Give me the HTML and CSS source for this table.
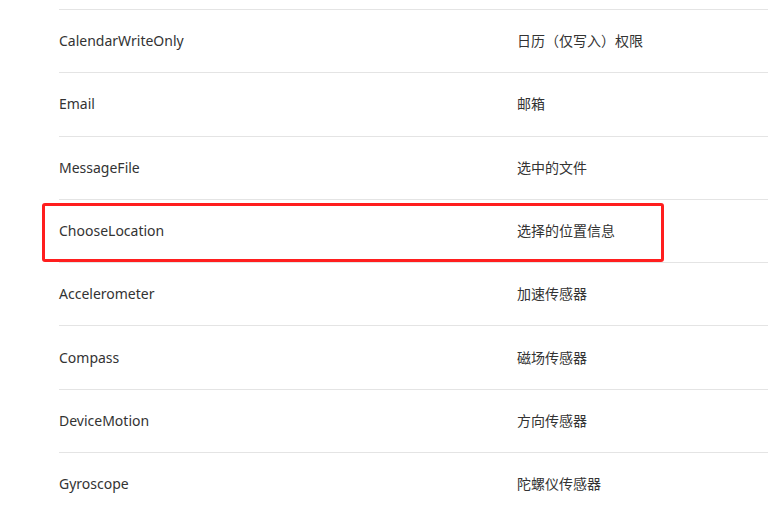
FILE: index.html
```html
<!DOCTYPE html>
<html lang="zh">
<head>
<meta charset="utf-8">
<link rel="stylesheet" href="styles.css">
</head>
<body>
<div class="table">
  <div class="row"><div class="key">CalendarWriteOnly</div><div class="val">日历（仅写入）权限</div></div>
  <div class="row"><div class="key">Email</div><div class="val">邮箱</div></div>
  <div class="row"><div class="key">MessageFile</div><div class="val">选中的文件</div></div>
  <div class="row highlighted"><div class="key">ChooseLocation</div><div class="val">选择的位置信息</div><div class="mark"></div></div>
  <div class="row"><div class="key">Accelerometer</div><div class="val">加速传感器</div></div>
  <div class="row"><div class="key">Compass</div><div class="val">磁场传感器</div></div>
  <div class="row"><div class="key">DeviceMotion</div><div class="val">方向传感器</div></div>
  <div class="row"><div class="key">Gyroscope</div><div class="val">陀螺仪传感器</div></div>
</div>
</body>
</html>
```

FILE: styles.css
```css
html, body {
  margin: 0;
  padding: 0;
  background: #ffffff;
  overflow: hidden;
}
body {
  width: 768px;
  height: 508px;
  font-family: "Noto Sans", "Noto Sans CJK SC", sans-serif;
  font-size: 14px;
  color: #333333;
}
.table {
  margin-left: 59px;
  padding-top: 9px;
  width: 709px;
}
.row {
  position: relative;
  display: grid;
  grid-template-columns: 458px 1fr;
  align-items: center;
  box-sizing: border-box;
  height: 63.29px;
  border-top: 1px solid #e4e4e4;
}
.key, .val {
  line-height: 20px;
  white-space: nowrap;
}
.mark {
  position: absolute;
  left: -17px;
  top: 3px;
  width: 622px;
  height: 59px;
  box-sizing: border-box;
  border: 3px solid #ff1e1e;
  border-radius: 3px;
  pointer-events: none;
}
```
